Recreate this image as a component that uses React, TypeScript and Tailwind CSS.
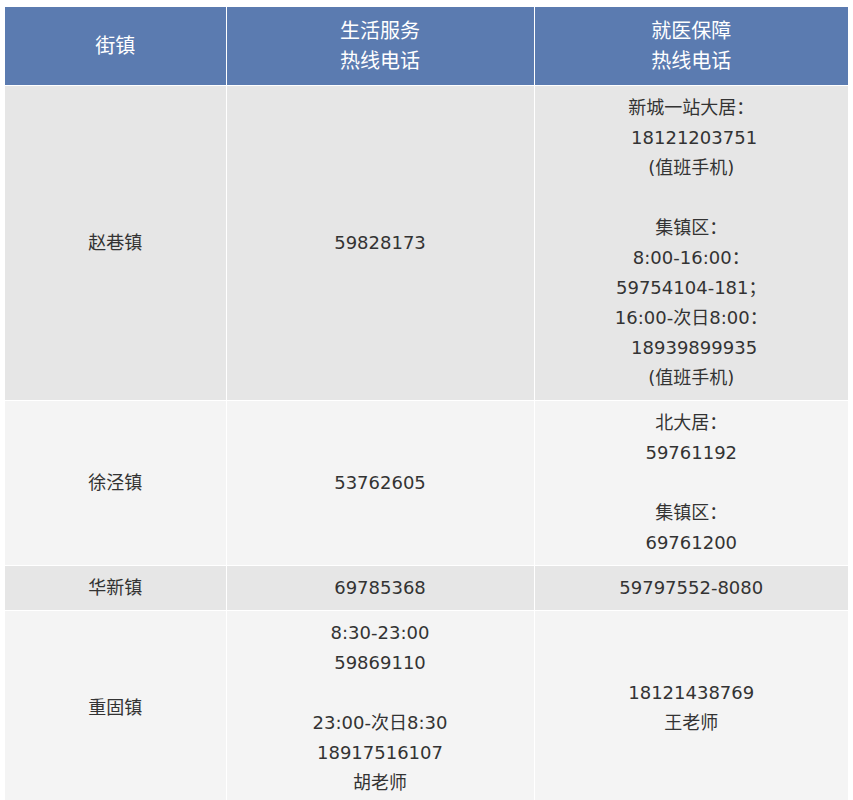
import React from 'react';

type Row = { town: string; life: string[]; medical: string[]; bg: string };

const rows: Row[] = [
    {
        town: '赵巷镇',
        life: ['59828173'],
        medical: ['新城一站大居：', ' 18121203751', '(值班手机)', '', '集镇区：', '8:00-16:00：', '59754104-181；', '16:00-次日8:00：', ' 18939899935', '(值班手机)'],
        bg: 'bg-[#e6e6e6]',
    },
    {
        town: '徐泾镇',
        life: ['53762605'],
        medical: ['北大居：', '59761192', '', '集镇区：', '69761200'],
        bg: 'bg-[#f4f4f4]',
    },
    {
        town: '华新镇',
        life: ['69785368'],
        medical: ['59797552-8080'],
        bg: 'bg-[#e6e6e6]',
    },
    {
        town: '重固镇',
        life: ['8:30-23:00', '59869110', '', '23:00-次日8:30', '18917516107', '胡老师'],
        medical: ['18121438769', '王老师'],
        bg: 'bg-[#f4f4f4]',
    },
];

function Lines({ lines }: { lines: string[] }) {
    return (
        <>
            {lines.map((l, i) => (
                <div key={i} className="h-[30px] whitespace-pre">{l}</div>
            ))}
        </>
    );
}

export default function App() {
    return (
        <div className="bg-white pt-[7px] pl-[5px] min-h-[800px] font-['DejaVu_Sans','Noto_Sans_CJK_SC',sans-serif] text-[18px] leading-[30px] text-[#333]">
            <table className="border-collapse w-[843px] table-fixed">
                <colgroup>
                    <col className="w-[221px]" />
                    <col className="w-[308px]" />
                    <col className="w-[314px]" />
                </colgroup>
                <thead>
                    <tr className="bg-[#5b7bb0] text-white text-[20px]">
                        <th className="h-[78px] font-normal border border-white border-t-0 border-l-0 text-center align-middle">街镇</th>
                        <th className="font-normal border border-white border-t-0 text-center align-middle">生活服务<br />热线电话</th>
                        <th className="font-normal border border-white border-t-0 border-r-0 text-center align-middle">就医保障<br />热线电话</th>
                    </tr>
                </thead>
                <tbody>
                    {rows.map((r) => (
                        <tr key={r.town} className={r.bg}>
                            <td className="border border-white border-l-0 py-[7px] text-center align-middle">{r.town}</td>
                            <td className="border border-white py-[7px] text-center align-middle"><Lines lines={r.life} /></td>
                            <td className="border border-white border-r-0 py-[7px] text-center align-middle"><Lines lines={r.medical} /></td>
                        </tr>
                    ))}
                </tbody>
            </table>
        </div>
    );
}
